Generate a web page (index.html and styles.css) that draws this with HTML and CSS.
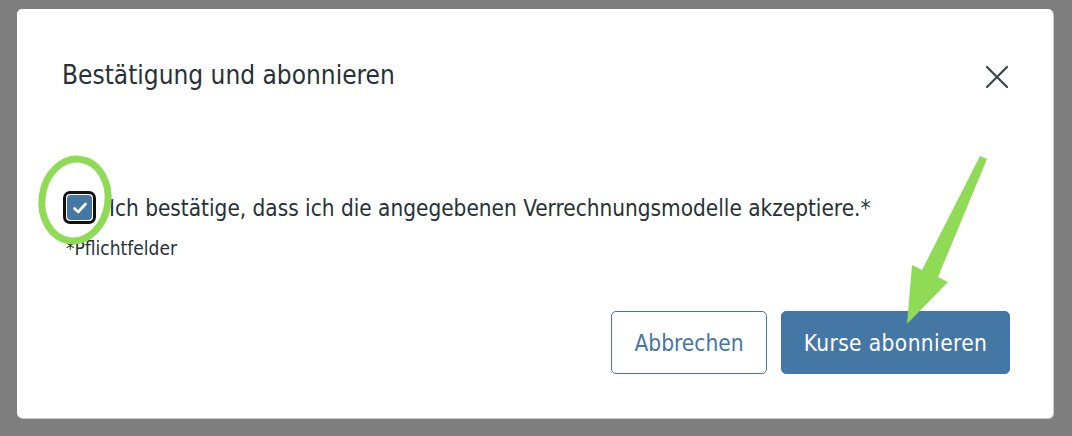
FILE: index.html
```html
<!DOCTYPE html>
<html lang="de">
<head>
<meta charset="utf-8">
<title>Bestätigung und abonnieren</title>
<link rel="stylesheet" href="styles.css">
</head>
<body>
<div class="modal">
  <div class="modal-header">
    <h2 class="modal-title">Bestätigung und abonnieren</h2>
    <button class="close" aria-label="Schließen">
      <svg width="24" height="24" viewBox="0 0 24 24"><path d="M2 2 L22 22 M22 2 L2 22" stroke="#3a4448" stroke-width="2.2" fill="none" stroke-linecap="round"/></svg>
    </button>
  </div>
  <div class="modal-body">
    <label class="check-row">
      <span class="checkbox">
        <span class="box">
          <svg width="16" height="14" viewBox="0 0 16 14"><path d="M2.5 7.5 L6.2 11 L13.5 3" stroke="#fff" stroke-width="2.6" fill="none" stroke-linecap="round" stroke-linejoin="round"/></svg>
        </span>
      </span>
      <span class="check-label">Ich bestätige, dass ich die angegebenen Verrechnungsmodelle akzeptiere.*</span>
    </label>
    <p class="required">*Pflichtfelder</p>
  </div>
  <div class="modal-footer">
    <button class="btn btn-outline">Abbrechen</button>
    <button class="btn btn-primary">Kurse abonnieren</button>
  </div>
</div>
<svg class="annotations" width="1072" height="436" viewBox="0 0 1072 436">
  <ellipse cx="75" cy="200" rx="33" ry="41" transform="rotate(8 75 200)" fill="none" stroke="#8fdb55" stroke-width="7"/>
  <polygon points="980,156 987,159 938,277 948,282 907,324 912,265 922,270" fill="#8fdb55"/>
</svg>
</body>
</html>
```
FILE: styles.css
```css
html, body {
  margin: 0;
  padding: 0;
}
body {
  background: #7f7f7f;
  width: 1072px;
  height: 436px;
  padding: 9px 19px 18px 17px;
  box-sizing: border-box;
  font-family: "DejaVu Sans Condensed", "DejaVu Sans", Verdana, sans-serif;
  color: #263238;
  position: relative;
  overflow: hidden;
}
.modal {
  background: #fff;
  border-radius: 5px;
  height: 409px;
  box-sizing: border-box;
  box-shadow: 1px 1px 0 #c8c8c8;
  display: flex;
  flex-direction: column;
}
.modal-header {
  display: flex;
  align-items: center;
  justify-content: space-between;
  padding: 50px 44px 0 45px;
}
.modal-title {
  margin: 0;
  font-size: 26px;
  font-weight: normal;
  line-height: 32px;
  letter-spacing: 0;
}
.close {
  background: none;
  border: 0;
  padding: 0;
  width: 24px;
  height: 24px;
  margin-top: 4px;
  display: flex;
}
.modal-body {
  padding: 100px 40px 0 46px;
}
.check-row {
  display: flex;
  align-items: center;
  gap: 13px;
}
.checkbox {
  width: 33px;
  height: 33px;
  box-sizing: border-box;
  border: 3px solid #111;
  border-radius: 7px;
  padding: 1px;
  background: #fff;
  display: flex;
}
.box {
  flex: 1;
  background: #4577a5;
  border-radius: 4px;
  display: flex;
  align-items: center;
  justify-content: center;
}
.check-label {
  font-size: 22.4px;
  line-height: 30px;
}
.required {
  margin: 13px 0 0 3px;
  font-size: 19px;
  line-height: 22px;
}
.modal-footer {
  margin-top: auto;
  display: flex;
  justify-content: flex-end;
  gap: 14px;
  padding: 0 43px 44px 0;
}
.btn {
  font-family: "DejaVu Sans Condensed", "DejaVu Sans", Verdana, sans-serif;
  font-size: 22.5px;
  height: 63px;
  border-radius: 5px;
  padding: 0 6px;
  box-sizing: border-box;
}
.btn-outline {
  width: 156px;
  background: #fff;
  color: #4577a5;
  border: 1px solid #4577a5;
}
.btn-primary {
  width: 229px;
  background: #4577a5;
  color: #fff;
  border: 1px solid #4577a5;
  letter-spacing: 0.4px;
}
.annotations {
  position: absolute;
  left: 0;
  top: 0;
  pointer-events: none;
}
```
